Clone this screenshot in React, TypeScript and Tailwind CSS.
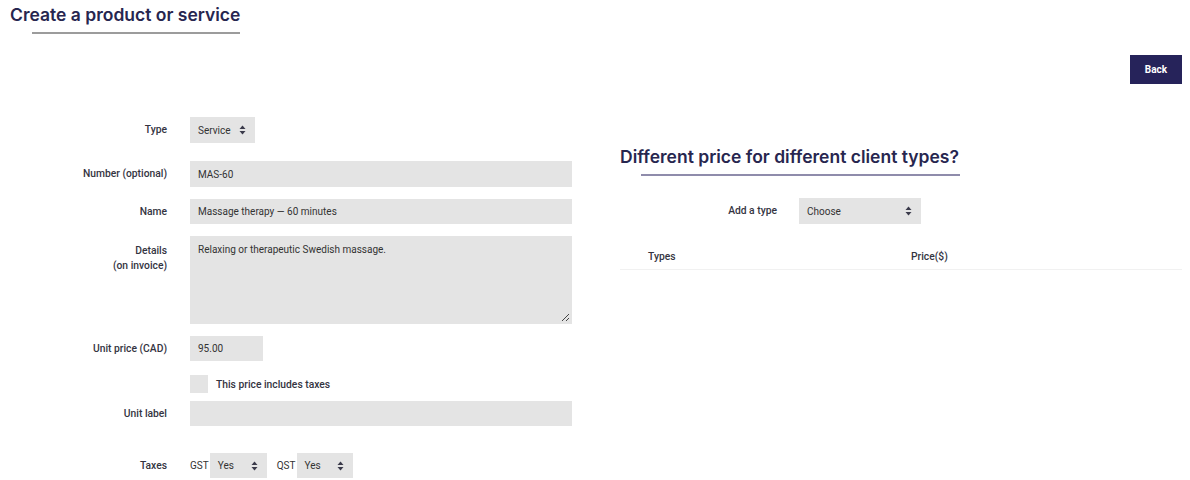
import React from "react";

function Arrows() {
  return (
    <svg width="7" height="10" viewBox="0 0 7 10" className="shrink-0">
      <path d="M3.5 0.5 L6.5 4 L0.5 4 Z" fill="#3a3a4a" />
      <path d="M3.5 9.5 L6.5 6 L0.5 6 Z" fill="#3a3a4a" />
    </svg>
  );
}

function Select({ value, className }: { value: string; className: string }) {
  return (
    <div
      className={`flex items-center justify-between bg-[#e4e4e4] pl-[8px] pr-[9px] text-[10px] text-[#333] ${className}`}
    >
      <span>{value}</span>
      <Arrows />
    </div>
  );
}

function Label({ children, className = "" }: { children: React.ReactNode; className?: string }) {
  return (
    <div className={`w-[167px] shrink-0 text-right text-[10.3px] font-medium text-[#34343f] ${className}`}>
      {children}
    </div>
  );
}

export default function App() {
  return (
    <div className="relative h-[480px] w-[1190px] overflow-hidden bg-white font-['Roboto',sans-serif]">
      {/* page heading */}
      <div className="pl-[10px] pt-[4px]">
        <h1 className="font-['Inter',sans-serif] text-[17.5px] font-semibold leading-[22px] text-[#27264f]">
          Create a product or service
        </h1>
        <div className="ml-[22px] mt-[6px] h-[2px] w-[208px] bg-[#9c9c9c]" />
      </div>

      <div className="flex justify-end pr-[8px] pt-[21px]">
        <button className="h-[29px] w-[52px] bg-[#26235a] text-[10px] font-bold text-white">Back</button>
      </div>

      <div className="mt-[33px] flex">
        {/* product form */}
        <div className="flex w-[620px] shrink-0 flex-col">
          <div className="flex h-[26px] items-center gap-[23px]">
            <Label>Type</Label>
            <Select value="Service" className="h-[26px] w-[65px]" />
          </div>

          <div className="mt-[18px] flex h-[26px] items-center gap-[23px]">
            <Label>Number (optional)</Label>
            <div className="flex h-[26px] w-[382px] items-center bg-[#e4e4e4] px-[8px] text-[10px] text-[#333]">MAS-60</div>
          </div>

          <div className="mt-[12px] flex h-[25px] items-center gap-[23px]">
            <Label>Name</Label>
            <div className="flex h-[25px] w-[382px] items-center bg-[#e4e4e4] px-[8px] text-[10px] text-[#333]">
              Massage therapy — 60 minutes
            </div>
          </div>

          <div className="mt-[12px] flex gap-[23px]">
            <Label className="pt-[7px] leading-[15px]">
              Details
              <br />
              (on invoice)
            </Label>
            <div className="relative h-[88px] w-[382px] bg-[#e4e4e4] px-[8px] pt-[6px] text-[10px] text-[#333]">
              Relaxing or therapeutic Swedish massage.
              <svg width="9" height="9" viewBox="0 0 9 9" className="absolute bottom-[2px] right-[2px]">
                <path d="M8 1 L1 8 M8 5 L5 8" stroke="#444" strokeWidth="1" />
              </svg>
            </div>
          </div>

          <div className="mt-[12px] flex h-[25px] items-center gap-[23px]">
            <Label>Unit price (CAD)</Label>
            <div className="flex h-[25px] w-[73px] items-center bg-[#e4e4e4] px-[8px] text-[10px] text-[#333]">95.00</div>
          </div>

          <div className="ml-[190px] mt-[14px] flex h-[18px] items-center gap-[8px]">
            <div className="h-[18px] w-[18px] bg-[#e4e4e4]" />
            <span className="pt-[2px] text-[10.3px] font-medium text-[#34343f]">This price includes taxes</span>
          </div>

          <div className="mt-[8px] flex h-[25px] items-center gap-[23px]">
            <Label>Unit label</Label>
            <div className="h-[25px] w-[382px] bg-[#e4e4e4]" />
          </div>

          <div className="mt-[27px] flex h-[25px] items-center gap-[23px]">
            <Label>Taxes</Label>
            <div className="flex items-center text-[10px] text-[#333]">
              <span className="mr-[1px]">GST</span>
              <Select value="Yes" className="h-[25px] w-[57px]" />
              <span className="ml-[10px] mr-[1px]">QST</span>
              <Select value="Yes" className="h-[25px] w-[56px]" />
            </div>
          </div>
        </div>

        {/* client-type pricing */}
        <div className="w-[562px] shrink-0 pt-[28px]">
          <h2 className="font-['Inter',sans-serif] text-[17.5px] font-semibold leading-[24px] text-[#27264f]">
            Different price for different client types?
          </h2>
          <div className="ml-[21px] mt-[5px] h-[2px] w-[319px] bg-[#8f8cab]" />

          <div className="mt-[22px] flex h-[26px] items-center">
            <div className="w-[157px] text-right text-[10.3px] font-medium text-[#34343f]">Add a type</div>
            <Select value="Choose" className="ml-[22px] h-[26px] w-[122px]" />
          </div>

          <div className="mt-[21px] flex h-[25px] items-center border-b border-[#f1f1f1] text-[10.3px] font-medium text-[#34343f]">
            <span className="w-[291px] pl-[28px]">Types</span>
            <span>Price($)</span>
          </div>
        </div>
      </div>
    </div>
  );
}
